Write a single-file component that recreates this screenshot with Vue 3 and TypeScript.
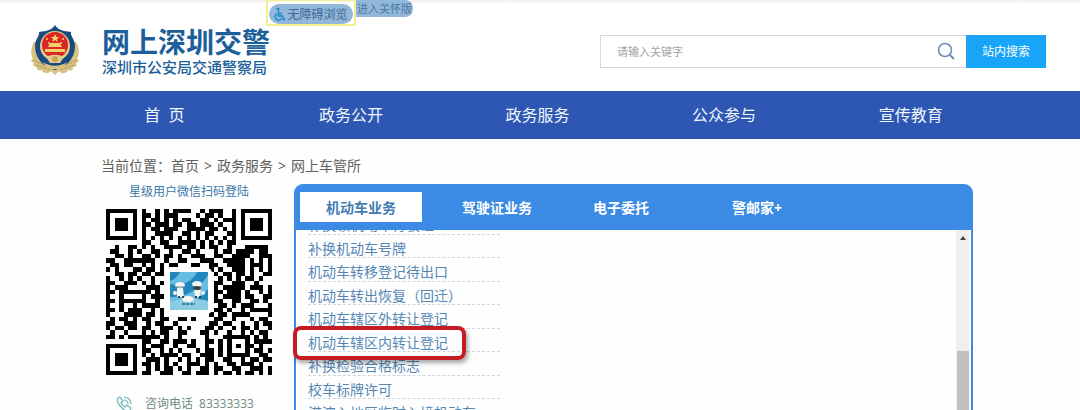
<script setup lang="ts">
import { ref } from 'vue'

const keyword = ref('')
const activeTab = ref(0)

const navItems: string[] = ['首\u00a0\u00a0页', '政务公开', '政务服务', '公众参与', '宣传教育']
const crumbs: string[] = ['首页', '政务服务', '网上车管所']
const tabs: string[] = ['机动车业务', '驾驶证业务', '电子委托', '警邮家+']

interface Service {
  name: string
  marked?: boolean
}

const services: Service[] = [
  { name: '补换领机动车行驶证' },
  { name: '补换机动车号牌' },
  { name: '机动车转移登记待出口' },
  { name: '机动车转出恢复（回迁）' },
  { name: '机动车辖区外转让登记' },
  { name: '机动车辖区内转让登记', marked: true },
  { name: '补换检验合格标志' },
  { name: '校车标牌许可' },
  { name: '港澳入地区临时入境机动车' },
]

const qrRows: string[] = [
  '#######.#..#.#.####..#.###..#.#######',
  '#.....#.##.#.###....#.##.#..#.#.....#',
  '#.###.#.#.##.#.#.##..##.#.###.#.###.#',
  '#.###.#.##.###.##.##.###.#..#.#.###.#',
  '#.###.#.#.##.###..####.##.#.#.#.###.#',
  '#.....#.#..####..##.#.##...##.#.....#',
  '#######.#.#.#.#.#.#.#.#.#.#.#.#######',
  '........##..##..####.#.#.#.##........',
  '..#..##.#.#..####.##.#.##..#...#####.',
  '.##..#.#..##..#..##.#...#.##.####.##.',
  '..##.#..##.#.##.#..###..##..####..###',
  '##..#######..#..##...###..#####.#.#.#',
  '.##.##..#.#.#.##...##..##..####.###.#',
  '#.#...##.##.#..........#.#..###.#.#.#',
  '..##.##.##.##...........#.##.##.#..##',
  '#..#.#.#..#..............#.#.#.##.#..',
  '##..###.#.#.#...........##..###..#...',
  '#.###....###............#.#####.###.#',
  '##.#######.#............##.###.#..#.#',
  '#..#....#.###...........#.####.##..##',
  '##.######..#............##..##..##.#.',
  '#..#..#.####.............##.#.###...#',
  '##.#.###..#.#...........##.#..#.#####',
  '#...####.##.#..........#.##.####....#',
  '.#.##.#.##..##..##.#....##..#...#.##.',
  '##..###..#.##..#.......##.##..#..#.##',
  '#.##.##.##..###.#.#...##.#..#.##.#..#',
  '.#..#...#.#.##..##...##.#..#..#.#.##.',
  '##.#.#######.#..#.....#...######.#.#.',
  '........##..##.###.#..##.#.#...#.####',
  '#######.#.###..#..##..#..#.#.#.##.#..',
  '#.....#.##..#.#.#...#.##.#.#...#.##.#',
  '#.###.#.#.#.####.##..###.#.#####..##.',
  '#.###.#..###.#..#.#.#.##..##..#.##.##',
  '#.###.#.##.#.#.#..###.#.#..##.###.#..',
  '#.....#..#.#.##.#.#..##.##..##..###.#',
  '#######.##..###..##.###.#.##.#.##.#.#',
]

const qrPath: string = qrRows
  .map((row, y) =>
    [...row].map((cell, x) => (cell === '#' ? `M${x} ${y}h1v1h-1z` : '')).join(''),
  )
  .join('')
</script>

<template>
  <div class="page">
    <header class="header">
      <a class="brand" href="#">
        <svg class="emblem" viewBox="0 0 52 54" aria-hidden="true">
          <path d="M5 18C1 25 2 31 4 35c-3 1-2 3 1 4-2 2 0 4 3 4-1 3 2 4 5 3 1 4 7 4 9 1l4 4 4-4c2 3 8 3 9-1 3 1 6 0 5-3 3 0 5-2 3-4 3-1 4-3 1-4 2-4 3-10-1-17z" fill="#d7c183" />
          <path d="M4 36l16 7M7 41l14 5M48 36l-16 7M45 41l-14 5" stroke="#b9a163" fill="none" />
          <path d="M26 1c-3 5-8 6-16 7 1 4-4 7-4 14 0 12 8 21 20 24 12-3 20-12 20-24 0-7-5-10-4-14-8-1-13-2-16-7z" fill="#194a80" />
          <circle cx="26" cy="22" r="15" fill="#e4cb8c" />
          <circle cx="26" cy="21" r="13" fill="#d72528" />
          <path d="M26 10l1.300 3h3l-2.400 2 1 3-2.900-2-2.900 2 1-3-2.400-2h3zM19 23l2-4h10l2 4zm-3 5h20v-3H16z" fill="#f1d267" />
          <g fill="#f1d267"><circle cx="18" cy="15" r="1" /><circle cx="20" cy="19" r="1" /><circle cx="34" cy="15" r="1" /><circle cx="32" cy="19" r="1" /></g>
          <path d="M17 33c6-3 12-3 18 0l-4 6H21z" fill="#e4cb8c" />
          <path d="M14 38c7 5 17 5 24 0l-4 7H18z" fill="#d7c183" />
          <circle cx="26" cy="35" r="3" fill="#c9a45a" />
        </svg>
        <span class="brand-text">
          <strong class="brand-title">网上深圳交警</strong>
          <span class="brand-sub">深圳市公安局交通警察局</span>
        </span>
      </a>
      <div class="assist">
        <span class="assist-frame">
          <button class="assist-main" type="button">
            <svg class="wheelchair" viewBox="0 0 12 14" aria-hidden="true">
              <circle cx="4" cy="2" r="1.600" fill="#1689cb" />
              <path d="M4.500 4v5h4l1.500 3.500h1.500M4.500 6.500h3.500M3 6.500a3.600 3.600 0 1 0 5 4.700" fill="none" stroke="#1689cb" stroke-width="1.400" />
            </svg>
            无障碍浏览
          </button>
        </span>
        <button class="assist-care" type="button">进入关怀版</button>
      </div>
      <form class="search" role="search" @submit.prevent>
        <label class="search-box">
          <input v-model="keyword" type="text" placeholder="请输入关键字" aria-label="请输入关键字" />
          <svg class="magnifier" viewBox="0 0 18 18" aria-hidden="true">
            <circle cx="8" cy="8" r="6.500" fill="none" stroke="#6c8dbb" stroke-width="1.600" />
            <path d="M12.700 12.700L17 17" stroke="#6c8dbb" stroke-width="2" />
          </svg>
        </label>
        <button class="search-button" type="submit">站内搜索</button>
      </form>
    </header>

    <nav class="nav">
      <a v-for="item in navItems" :key="item" href="#">{{ item }}</a>
    </nav>

    <main class="main">
      <div class="crumbs">
        <span>当前位置：</span>
        <template v-for="(crumb, i) in crumbs" :key="crumb">
          <span v-if="i > 0" class="crumb-sep">&gt;</span>
          <a href="#">{{ crumb }}</a>
        </template>
      </div>

      <div class="content">
        <aside class="side">
          <div class="side-title">星级用户微信扫码登陆</div>
          <svg class="qr" viewBox="0 0 166 166" role="img" aria-label="微信二维码">
            <path :d="qrPath" transform="scale(4.4865)" shape-rendering="crispEdges" />
            <rect x="60" y="59" width="46" height="46" rx="5" fill="#fff" />
            <rect x="64" y="63" width="38" height="38" fill="#2187bd" />
            <path d="M64 75c12 3 23-3 27-12H74c-3 5-6 8-10 9zM64 88c17 1 29-8 38-22v14c-10 13-22 17-38 17z" fill="#67bce2" />
            <path d="M64 101V92c12-2 28-3 38 0v9z" fill="#8acce2" />
            <g fill="#f4f5f2">
              <ellipse cx="74" cy="76" rx="5" ry="3" /><path d="M71 79h6l1 9h-7z" /><circle cx="69" cy="84" r="2" />
              <ellipse cx="91" cy="75" rx="5" ry="3" /><path d="M88 79h7l-1 9h-5z" /><circle cx="97" cy="84" r="2" />
              <ellipse cx="82" cy="90" rx="6" ry="3" />
            </g>
            <path d="M72 88h2m2 0h2M89 88h2m2 0h2" stroke="#34424a" stroke-width="2" />
            <path d="M70 78h8" stroke="#6d858e" />
            <ellipse cx="91" cy="79" rx="4" ry="2" fill="#3a4144" />
            <path d="M76 95h13" stroke="#427a92" stroke-width="2" stroke-dasharray="3 1" />
          </svg>
          <div class="phone">
            <svg class="phone-icon" viewBox="0 0 16 16" aria-hidden="true">
              <path d="M2 2l2-1 3 4-2 2c1 2 2 3 4 4l2-2 4 3-1 2c-2 2-5 1-8-2C3 9 0 5 2 2z" fill="none" stroke="#71b9b8" stroke-width="1.300" />
              <path d="M8 4c2 0 4 2 4 4M8 1c4 0 7 3 7 7" fill="none" stroke="#71b9b8" stroke-width="1.200" />
            </svg>
            <span>咨询电话</span>
            <span class="phone-number">83333333</span>
          </div>
        </aside>

        <section class="panel">
          <div class="tabs" role="tablist">
            <button
              v-for="(tab, i) in tabs"
              :key="tab"
              type="button"
              role="tab"
              class="tab"
              :class="{ active: i === activeTab }"
              :aria-selected="i === activeTab"
              @click="activeTab = i"
            >{{ tab }}</button>
          </div>
          <div class="panel-body">
            <ul class="services">
              <li v-for="item in services" :key="item.name" :class="{ marked: item.marked }">
                <a href="#">{{ item.name }}</a>
              </li>
            </ul>
            <div class="scrollbar" aria-hidden="true">
              <span class="scroll-arrow"></span>
              <span class="scroll-thumb"></span>
            </div>
          </div>
        </section>
      </div>
    </main>
  </div>
</template>

<style>
body {
  margin: 0;
  background: #fff;
}
</style>

<style scoped>
* {
  box-sizing: border-box;
}
.page {
  display: flex;
  flex-direction: column;
  height: 100vh;
  overflow: hidden;
  background: #fefefe;
  font-family: "Open Sans", "Noto Sans CJK SC", sans-serif;
  color: #606060;
}
a {
  color: inherit;
  text-decoration: none;
}
button {
  border: 0;
  padding: 0;
  font-family: inherit;
  cursor: pointer;
}
.header {
  position: relative;
  flex: none;
  display: flex;
  align-items: center;
  justify-content: space-between;
  height: 91px;
  padding: 11px 34px 0 29px;
  background: linear-gradient(#f0eeee, #fff 4px);
}
.brand {
  display: flex;
  align-items: center;
  gap: 21px;
}
.emblem {
  width: 52px;
  height: 54px;
}
.brand-text {
  display: flex;
  flex-direction: column;
  color: #1c5f9a;
}
.brand-title {
  font-size: 28px;
  line-height: 32px;
  font-weight: 700;
}
.brand-sub {
  font-size: 15px;
  line-height: 18px;
  font-weight: 500;
}
.assist {
  position: absolute;
  top: 0;
  left: 266px;
  display: flex;
  align-items: flex-start;
}
.assist-frame {
  padding: 3px 1px 0;
  border: 2px solid #f2f08d;
  border-top-width: 1px;
}
.assist-main {
  display: flex;
  align-items: center;
  justify-content: center;
  gap: 1px;
  width: 84px;
  height: 20px;
  border-radius: 10px;
  background: #91b7da;
  color: #3f6893;
  font-size: 12px;
}
.wheelchair {
  width: 12px;
  height: 14px;
}
.assist-care {
  width: 57px;
  height: 17px;
  border-radius: 0 8px 8px 0;
  background: #91b7da;
  color: #4c789f;
  font-size: 11px;
  line-height: 17px;
}
.search {
  display: flex;
  width: 446px;
  height: 33px;
}
.search-box {
  flex: 1;
  display: flex;
  align-items: center;
  padding: 0 11px 0 16px;
  border: 1px solid #d8d8d8;
  border-right: 0;
  background: #fff;
}
.search-box input {
  flex: 1;
  min-width: 0;
  border: 0;
  padding: 0;
  outline: 0;
  background: transparent;
  font-family: inherit;
  font-size: 11px;
  color: #555;
}
.search-box input::placeholder {
  color: #a2a2a2;
}
.magnifier {
  width: 18px;
  height: 18px;
}
.search-button {
  width: 80px;
  background: #18a5f8;
  color: #fff;
  font-size: 12px;
}
.nav {
  flex: none;
  display: grid;
  grid-template-columns: repeat(5, 1fr);
  padding: 0 76px 0 71px;
  height: 48px;
  background: #2d57b3;
  color: #f1f7ff;
  font-size: 16px;
  line-height: 48px;
  text-align: center;
}
.main {
  flex: 1;
  min-height: 0;
  display: flex;
  flex-direction: column;
  padding: 17px 107px 0 101px;
}
.crumbs {
  flex: none;
  display: flex;
  gap: 5px;
  height: 28px;
  font-size: 14px;
  line-height: 20px;
}
.crumbs > span:first-child {
  margin-right: -5px;
}
.content {
  flex: 1;
  min-height: 0;
  display: flex;
}
.side {
  flex: none;
  width: 193px;
  padding: 0 22px 0 5px;
}
.side-title {
  color: #3978aa;
  font-size: 12px;
  line-height: 16px;
  text-align: center;
}
.qr {
  display: block;
  width: 166px;
  height: 166px;
  margin-top: 9px;
}
.phone {
  display: flex;
  align-items: center;
  margin-top: 20px;
  padding-left: 10px;
  color: #6f8a84;
  font-size: 12px;
  line-height: 18px;
}
.phone-icon {
  width: 16px;
  height: 16px;
  margin-right: 13px;
}
.phone-number {
  margin-left: 6px;
}
.panel {
  flex: 1;
  min-width: 0;
  display: flex;
  flex-direction: column;
  border: solid #3b8ae3;
  border-width: 0 2px;
  border-radius: 9px 9px 0 0;
  background: linear-gradient(#3b8ae3 46px, #fefefe 46px);
}
.tabs {
  flex: none;
  display: grid;
  grid-template-columns: 122px 150px 98px 174px;
  align-items: center;
  height: 46px;
  padding: 0 4px;
}
.tab {
  height: 30px;
  background: transparent;
  color: #fff;
  font-size: 14px;
  font-weight: 700;
}
.tab.active {
  background: #fff;
  color: #417db4;
}
.panel-body {
  flex: 1;
  min-height: 0;
  display: flex;
  justify-content: space-between;
  clip-path: inset(0 -4px);
}
.services {
  flex: none;
  display: grid;
  grid-auto-rows: 1fr;
  width: 204px;
  height: 212px;
  margin: -19px 0 0;
  padding: 0 0 0 12px;
  list-style: none;
  color: #5587b5;
  font-size: 14px;
  line-height: 17px;
}
.services li {
  position: relative;
  padding-top: 5px;
  border-bottom: 1px dashed #cfd5da;
  white-space: nowrap;
}
.services a {
  display: block;
}
.marked::after {
  content: "";
  position: absolute;
  z-index: 1;
  inset: -3px 34px -9px -15px;
  border: 4px solid #c51b22;
  border-radius: 8px;
  box-shadow: 2px 3px 4px rgba(0, 0, 0, 0.35);
  pointer-events: none;
}
.scrollbar {
  display: flex;
  flex-direction: column;
  align-items: center;
  justify-content: space-between;
  width: 13px;
  margin-right: 2px;
  padding-top: 6px;
  background: #efefef;
}
.scroll-arrow {
  border: 3px solid transparent;
  border-top: 0;
  border-bottom: 4px solid #444;
}
.scroll-thumb {
  width: 12px;
  height: 34%;
  background: #c0c0c0;
}
</style>
